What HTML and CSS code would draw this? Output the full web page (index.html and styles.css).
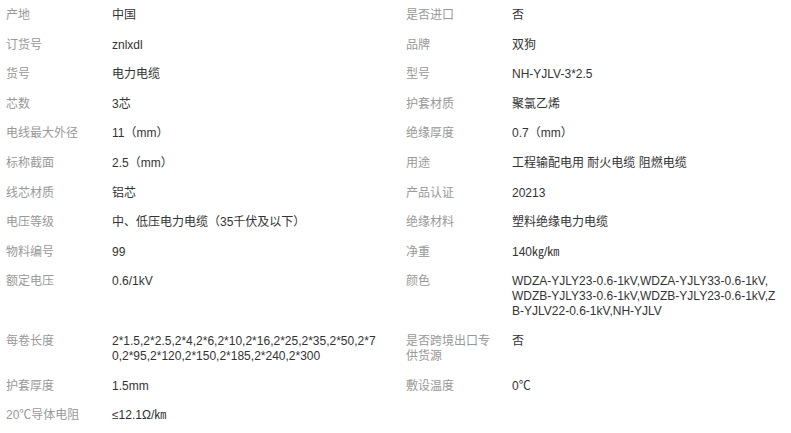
FILE: index.html
```html
<!DOCTYPE html>
<html lang="zh-CN">
<head>
<meta charset="utf-8">
<title>商品参数</title>
<link rel="stylesheet" href="styles.css">
</head>
<body>
<div class="specs">
  <div class="item"><span class="label">产地</span><span class="value">中国</span></div>
  <div class="item"><span class="label">是否进口</span><span class="value">否</span></div>

  <div class="item"><span class="label">订货号</span><span class="value">znlxdl</span></div>
  <div class="item"><span class="label">品牌</span><span class="value">双狗</span></div>

  <div class="item"><span class="label">货号</span><span class="value">电力电缆</span></div>
  <div class="item"><span class="label">型号</span><span class="value">NH-YJLV-3*2.5</span></div>

  <div class="item"><span class="label">芯数</span><span class="value">3芯</span></div>
  <div class="item"><span class="label">护套材质</span><span class="value">聚氯乙烯</span></div>

  <div class="item"><span class="label">电线最大外径</span><span class="value">11（mm）</span></div>
  <div class="item"><span class="label">绝缘厚度</span><span class="value">0.7（mm）</span></div>

  <div class="item"><span class="label">标称截面</span><span class="value">2.5（mm）</span></div>
  <div class="item"><span class="label">用途</span><span class="value">工程输配电用 耐火电缆 阻燃电缆</span></div>

  <div class="item"><span class="label">线芯材质</span><span class="value">铝芯</span></div>
  <div class="item"><span class="label">产品认证</span><span class="value">20213</span></div>

  <div class="item"><span class="label">电压等级</span><span class="value">中、低压电力电缆（35千伏及以下）</span></div>
  <div class="item"><span class="label">绝缘材料</span><span class="value">塑料绝缘电力电缆</span></div>

  <div class="item"><span class="label">物料编号</span><span class="value">99</span></div>
  <div class="item"><span class="label">净重</span><span class="value">140㎏/㎞</span></div>

  <div class="item"><span class="label">额定电压</span><span class="value">0.6/1kV</span></div>
  <div class="item"><span class="label">颜色</span><span class="value">WDZA-YJLY23-0.6-1kV,WDZA-YJLY33-0.6-1kV,WDZB-YJLY33-0.6-1kV,WDZB-YJLY23-0.6-1kV,ZB-YJLV22-0.6-1kV,NH-YJLV</span></div>

  <div class="item"><span class="label">每卷长度</span><span class="value">2*1.5,2*2.5,2*4,2*6,2*10,2*16,2*25,2*35,2*50,2*70,2*95,2*120,2*150,2*185,2*240,2*300</span></div>
  <div class="item"><span class="label">是否跨境出口专供货源</span><span class="value">否</span></div>

  <div class="item"><span class="label">护套厚度</span><span class="value">1.5mm</span></div>
  <div class="item"><span class="label">敷设温度</span><span class="value">0℃</span></div>

  <div class="item"><span class="label">20℃导体电阻</span><span class="value">≤12.1Ω/㎞</span></div>
  <div class="item"></div>
</div>
</body>
</html>
```

FILE: styles.css
```css
html, body {
  margin: 0;
  padding: 0;
  background: #ffffff;
  overflow: hidden;
}

body {
  font-family: "Liberation Sans", Arial, "Noto Sans CJK SC", sans-serif;
  font-size: 12px;
  line-height: 15px;
  color: #333333;
}

.specs {
  display: grid;
  grid-template-columns: 400px 1fr;
}

.item {
  display: flex;
  align-items: flex-start;
  padding: 8px 0 6.6px 6px;
}

.label {
  flex: 0 0 90px;
  margin-right: 16px;
  color: #999999;
  word-break: break-all;
}

.value {
  flex: 0 0 265px;
  color: #333333;
  word-break: break-all;
}
```
